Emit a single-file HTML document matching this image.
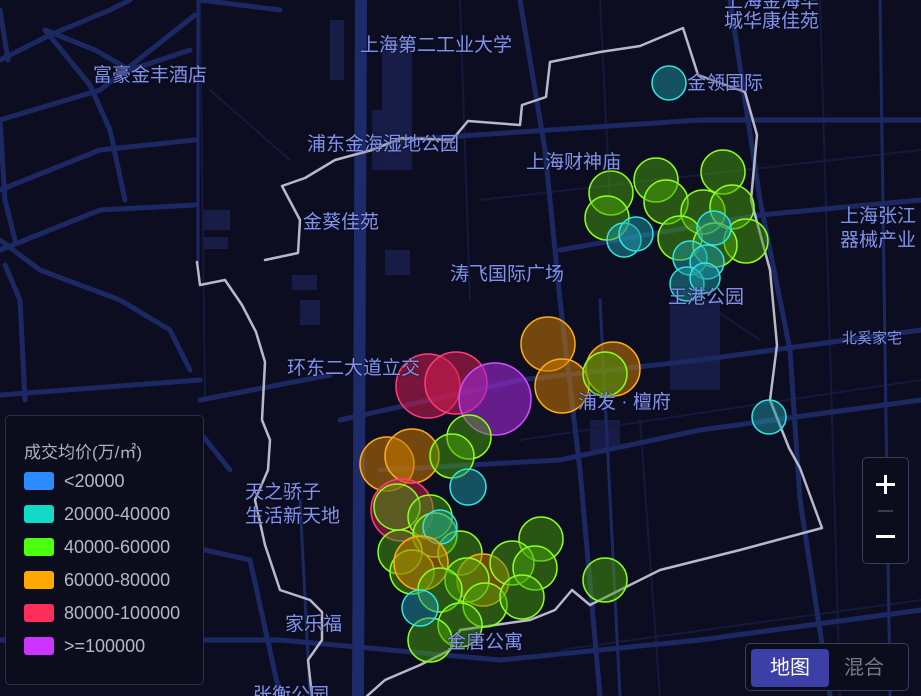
<!DOCTYPE html>
<html><head><meta charset="utf-8"><style>
html,body{margin:0;padding:0;width:921px;height:696px;overflow:hidden;background:#0c0d20;font-family:"Liberation Sans","Noto Sans CJK SC",sans-serif;position:relative}
svg{position:absolute;left:0;top:0}
.lbl{position:absolute;color:#8092ea;font-size:19px;white-space:nowrap;line-height:21px;text-shadow:0 0 2px #0c0d20}
.legend{position:absolute;left:5px;top:415px;width:199px;height:270px;background:#0b0c1c;border:1px solid #2c2f48;border-radius:5px;box-sizing:border-box}
.legend .t{position:absolute;left:18px;top:22px;color:#b0b0bc;font-size:17px}
.row{position:absolute;left:18px;color:#b8b8c4;font-size:18px;height:20px;line-height:20px}
.row i{display:inline-block;width:30px;height:18px;border-radius:3px;vertical-align:top;margin-right:10px;margin-top:1px}
.zoom{position:absolute;left:862px;top:457px;width:47px;height:107px;background:#0b0c1c;border:1px solid #3a3d55;border-radius:5px;box-sizing:border-box}
.tog{position:absolute;left:745px;top:643px;width:164px;height:48px;background:#0b0c1c;border:1px solid #3a3d55;border-radius:5px;box-sizing:border-box}
.tog .a{position:absolute;left:5px;top:5px;width:78px;height:38px;background:#3c3fa6;border-radius:4px;color:#fff;font-size:20px;text-align:center;line-height:38px}
.tog .b{position:absolute;left:98px;top:5px;color:#77778a;font-size:20px;line-height:38px}
</style></head><body>
<svg width="921" height="696" viewBox="0 0 921 696">
<g fill="none" stroke-linecap="round">
<g fill="#1a2150" stroke="none" opacity=".8">
<rect x="203" y="210" width="27" height="20"/><rect x="203" y="237" width="25" height="12"/>
<rect x="292" y="275" width="25" height="15"/><rect x="300" y="300" width="20" height="25"/>
<rect x="385" y="250" width="25" height="25"/><rect x="330" y="20" width="14" height="60"/>
<rect x="382" y="40" width="30" height="80"/><rect x="670" y="300" width="50" height="90"/>
<rect x="590" y="420" width="30" height="30"/><rect x="372" y="110" width="40" height="60"/>
</g>
<g stroke="#151a3c" stroke-width="2">
<path d="M200 0 L205 400 M460 0 L470 300 M600 0 L610 200 M820 0 L840 696 M560 650 L921 600 M640 420 L660 696 M700 300 L760 340 M480 200 L921 150 M520 440 L921 380 M210 90 L290 160"/>
</g>
<g stroke="#1c2862" stroke-width="5">
<path d="M0 60 L50 35 L110 10 L130 0"/>
<path d="M0 120 L100 90 L195 15"/>
<path d="M45 30 L95 50 L130 70 L190 50"/>
<path d="M0 190 L100 150 L195 140"/>
<path d="M0 250 L100 210 L195 205"/>
<path d="M45 30 L90 85 L110 130 L125 200"/>
<path d="M0 120 L5 200 L15 240"/>
<path d="M0 240 L40 270 L120 300 L170 330 L190 370"/>
<path d="M5 265 L20 300 L25 400"/>
<path d="M0 10 L8 60"/>
<path d="M340 420 L520 380 L700 360 L921 330"/>
<path d="M380 470 L560 460 L700 430 L921 400"/>
<path d="M0 395 L200 380"/>
<path d="M0 640 L280 640 L500 660 L700 640 L921 610"/>
<path d="M520 0 L545 150 L560 300 L580 470 L600 696"/>
<path d="M730 0 L760 200 L790 350 L800 500 L830 696"/>
<path d="M160 540 L250 560 L280 696"/>
<path d="M190 420 L230 470"/>
<path d="M200 400 L330 375"/>
<path d="M560 250 L760 215 L921 200"/>
<path d="M400 140 L700 120 L921 120"/>
<path d="M200 0 L280 10"/>
</g>
<g stroke="#1c2862" stroke-width="3">
<path d="M198 0 L198 262"/>
<path d="M880 0 L890 696"/>
<path d="M600 300 L620 696"/>
<path d="M300 500 L310 696"/>
</g>
<path d="M361 0 L358 696" stroke="#1e2b6a" stroke-width="12"/>
<path d="M265 260 L298 253 L300 220 L282 186 L305 178 L335 160 L372 150 L402 138 L452 140 L468 121 L520 125 L522 105 L546 97 L550 62 L600 52 L640 46 L683 28 L698 75 L745 92 L757 135 L751 200 L770 270 L777 345 L770 400 L789 448 L800 468 L822 528 L740 550 L660 570 L590 605 L572 590 L555 610 L530 620 L460 630 L450 650 L420 665 L385 680 L367 696" stroke="#b8b8c8" stroke-width="2.5" stroke-linejoin="round"/>
<path d="M197 262 L200 285 L225 280 L242 305 L256 332 L265 362 L262 420 L270 440 L268 470 L255 500 L265 545 L280 590 L310 600 L322 612 L322 640 L308 660 L312 696" stroke="#b8b8c8" stroke-width="2.5" stroke-linejoin="round"/>
</g>
<g stroke-width="1.5">
<g fill="rgba(30,150,160,.5)" stroke="#33e6e0">
<circle cx="669" cy="83" r="17"/><circle cx="769" cy="417" r="17"/>
</g>
<g fill="rgba(200,120,0,.55)" stroke="#ffad1a">
<circle cx="548" cy="344" r="27"/><circle cx="562" cy="386" r="27"/><circle cx="613" cy="369" r="27"/>
<circle cx="387" cy="464" r="27"/><circle cx="412" cy="456" r="27"/>
</g>
<g fill="rgba(210,30,80,.55)" stroke="#ff3d7a">
<circle cx="428" cy="386" r="32"/><circle cx="456" cy="383" r="31"/>
</g>
<g fill="rgba(160,40,210,.6)" stroke="#d34dff"><circle cx="495" cy="399" r="36"/></g>
<g fill="rgba(70,160,10,.5)" stroke="#8cff1a">
<circle cx="605" cy="374" r="22"/><circle cx="469" cy="437" r="22"/><circle cx="452" cy="456" r="22"/>
</g>
<g fill="rgba(30,150,160,.5)" stroke="#33e6e0"><circle cx="468" cy="487" r="18"/></g>
<g fill="rgba(210,30,80,.5)" stroke="#ff3d7a"><circle cx="402" cy="510" r="31"/></g>
<g fill="rgba(70,160,10,.5)" stroke="#8cff1a">
<circle cx="397" cy="507" r="23"/><circle cx="430" cy="517" r="22"/><circle cx="435" cy="535" r="22"/><circle cx="400" cy="552" r="22"/><circle cx="460" cy="553" r="22"/><circle cx="412" cy="572" r="22"/>
</g>
<g fill="rgba(30,150,160,.5)" stroke="#33e6e0"><circle cx="440" cy="527" r="17"/></g>
<g fill="rgba(200,120,0,.55)" stroke="#ffad1a"><circle cx="421" cy="563" r="27"/><circle cx="483" cy="580" r="26"/></g>
<g fill="rgba(70,160,10,.5)" stroke="#8cff1a">
<circle cx="541" cy="539" r="22"/><circle cx="512" cy="563" r="22"/><circle cx="535" cy="568" r="22"/><circle cx="605" cy="580" r="22"/>
<circle cx="467" cy="580" r="22"/><circle cx="440" cy="590" r="22"/><circle cx="485" cy="605" r="22"/><circle cx="522" cy="597" r="22"/><circle cx="460" cy="625" r="22"/><circle cx="430" cy="640" r="22"/>
</g>
<g fill="rgba(30,150,160,.5)" stroke="#33e6e0"><circle cx="420" cy="608" r="18"/></g>
<g fill="rgba(70,160,10,.5)" stroke="#8cff1a">
<circle cx="611" cy="193" r="22"/><circle cx="607" cy="218" r="22"/><circle cx="656" cy="180" r="22"/><circle cx="666" cy="202" r="22"/>
<circle cx="723" cy="172" r="22"/><circle cx="703" cy="212" r="22"/><circle cx="732" cy="207" r="22"/><circle cx="680" cy="238" r="22"/><circle cx="746" cy="241" r="22"/><circle cx="715" cy="245" r="22"/>
</g>
<g fill="rgba(30,150,160,.5)" stroke="#33e6e0">
<circle cx="624" cy="240" r="17"/><circle cx="636" cy="234" r="17"/><circle cx="714" cy="228" r="17"/><circle cx="690" cy="258" r="17"/><circle cx="707" cy="262" r="17"/><circle cx="687" cy="284" r="17"/><circle cx="705" cy="278" r="15"/>
</g>
</g>
</svg>
<div class="lbl" style="left:724px;top:-9px">上海金海华</div>
<div class="lbl" style="left:724px;top:11px">城华康佳苑</div>
<div class="lbl" style="left:360px;top:35px">上海第二工业大学</div>
<div class="lbl" style="left:93px;top:65px">富豪金丰酒店</div>
<div class="lbl" style="left:687px;top:73px">金领国际</div>
<div class="lbl" style="left:307px;top:134px">浦东金海湿地公园</div>
<div class="lbl" style="left:526px;top:152px">上海财神庙</div>
<div class="lbl" style="left:840px;top:206px">上海张江</div>
<div class="lbl" style="left:840px;top:230px">器械产业</div>
<div class="lbl" style="left:303px;top:212px">金葵佳苑</div>
<div class="lbl" style="left:450px;top:264px">涛飞国际广场</div>
<div class="lbl" style="left:668px;top:287px">王港公园</div>
<div class="lbl" style="left:842px;top:328px;font-size:15px">北奚家宅</div>
<div class="lbl" style="left:287px;top:358px">环东二大道立交</div>
<div class="lbl" style="left:578px;top:392px">浦发 · 檀府</div>
<div class="lbl" style="left:245px;top:482px">天之骄子</div>
<div class="lbl" style="left:245px;top:506px">生活新天地</div>
<div class="lbl" style="left:285px;top:614px">家乐福</div>
<div class="lbl" style="left:447px;top:632px">金唐公寓</div>
<div class="lbl" style="left:253px;top:685px">张衡公园</div>
<div class="legend">
<div class="t">成交均价(万/㎡)</div>
<div class="row" style="top:55px"><i style="background:#2b8cff"></i>&lt;20000</div>
<div class="row" style="top:88px"><i style="background:#14d9c7"></i>20000-40000</div>
<div class="row" style="top:121px"><i style="background:#4cff0f"></i>40000-60000</div>
<div class="row" style="top:154px"><i style="background:#ffa800"></i>60000-80000</div>
<div class="row" style="top:187px"><i style="background:#ff2d5a"></i>80000-100000</div>
<div class="row" style="top:220px"><i style="background:#cc33ff"></i>&gt;=100000</div>
</div>
<div class="zoom">
<div style="position:absolute;left:13px;top:25px;width:19px;height:3px;background:#fff"></div>
<div style="position:absolute;left:21px;top:17px;width:3px;height:19px;background:#fff"></div>
<div style="position:absolute;left:15px;top:52px;width:15px;height:2px;background:#3a3a48"></div>
<div style="position:absolute;left:13px;top:77px;width:19px;height:3px;background:#fff"></div>
</div>
<div class="tog"><div class="a">地图</div><div class="b">混合</div></div>
</body></html>
